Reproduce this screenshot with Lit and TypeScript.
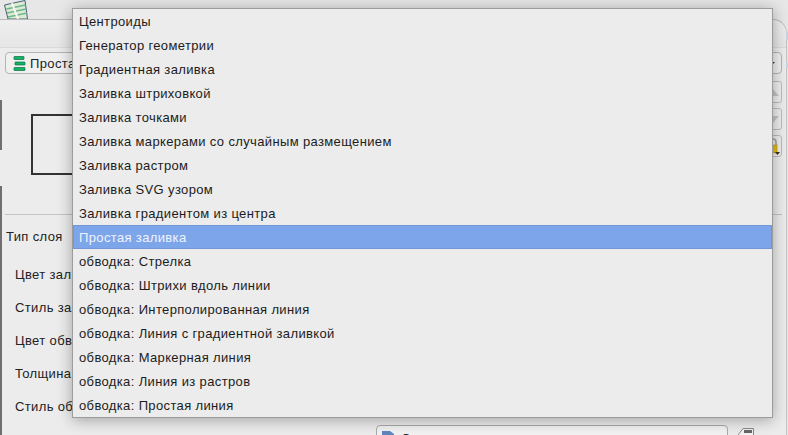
import { LitElement, html, css } from 'lit';
import { customElement } from 'lit/decorators.js';
import { classMap } from 'lit/directives/class-map.js';

const MENU_ITEMS = [
  'Центроиды',
  'Генератор геометрии',
  'Градиентная заливка',
  'Заливка штриховкой',
  'Заливка точками',
  'Заливка маркерами со случайным размещением',
  'Заливка растром',
  'Заливка SVG узором',
  'Заливка градиентом из центра',
  'Простая заливка',
  'обводка: Стрелка',
  'обводка: Штрихи вдоль линии',
  'обводка: Интерполированная линия',
  'обводка: Линия с градиентной заливкой',
  'обводка: Маркерная линия',
  'обводка: Линия из растров',
  'обводка: Простая линия',
];

const FIELDS = ['Цвет заливки', 'Стиль заливки', 'Цвет обводки', 'Толщина обводки', 'Стиль обводки', 'Стиль соединения'];

@customElement('app-root')
export class AppRoot extends LitElement {
  static styles = css`
    :host {
      display: block;
      font-family: 'Liberation Sans', Arial, sans-serif;
      font-size: 13px;
      letter-spacing: 0.36px;
      color: #222;
    }
    .page {
      position: relative;
      width: 788px;
      height: 435px;
      overflow: hidden;
      background: #e7e7e7;
      display: flex;
      flex-direction: column;
    }
    .titlebar {
      height: 19px;
      flex: none;
      padding-left: 4px;
    }
    .titlebar svg {
      display: block;
    }
    .window {
      flex: 1;
      min-height: 0;
      margin-right: 1px;
      border-top: 1px solid #b9b9b9;
      border-right: 1px solid #c4c4c4;
      border-top-right-radius: 14px;
      background: #ececec;
      display: flex;
      flex-direction: column;
    }
    .tabbar {
      height: 28px;
      flex: none;
      box-sizing: border-box;
      border-bottom: 1px solid #dadada;
      border-top-right-radius: 14px;
      background: linear-gradient(#eeeeee, #e6e6e6);
    }
    .content {
      flex: 1;
      min-height: 0;
      padding: 4px 4px 0 5px;
      display: flex;
      flex-direction: column;
    }
    .combo {
      height: 22px;
      flex: none;
      box-sizing: border-box;
      border: 1px solid #b4b4b4;
      border-radius: 4px;
      background: #f0f0f0;
      display: flex;
      align-items: center;
      gap: 4px;
      padding: 0 6px 0 7px;
    }
    .combo .arrow {
      margin-left: auto;
      width: 0;
      height: 0;
      border-left: 3px solid transparent;
      border-right: 3px solid transparent;
      border-top: 3px solid #333;
    }
    .preview {
      height: 140px;
      flex: none;
      display: flex;
      justify-content: space-between;
      padding-top: 7px;
      box-sizing: border-box;
    }
    .swatch {
      width: 130px;
      height: 61px;
      box-sizing: border-box;
      margin: 33px 0 0 26px;
      border: 2px solid #333;
    }
    .tools {
      display: flex;
      flex-direction: column;
      gap: 5px;
      width: 22px;
    }
    .tool {
      height: 22px;
      border: 1px solid #bdbdbd;
      border-radius: 3px;
      background: #eeeeee;
      display: flex;
      align-items: center;
      justify-content: flex-end;
      padding-right: 1px;
      box-sizing: border-box;
    }
    .rule {
      height: 1px;
      flex: none;
      background: #c4c4c4;
    }
    .type-row {
      margin-top: 14px;
      height: 15px;
      line-height: 15px;
      padding-left: 1px;
      flex: none;
    }
    .fields {
      display: flex;
      flex-direction: column;
      gap: 18px;
      padding: 23px 0 0 10px;
    }
    .field {
      height: 15px;
      line-height: 15px;
      white-space: nowrap;
    }
    .edge {
      position: absolute;
      left: 0;
      width: 2px;
      background: #6f6f6f;
    }
    .edge.top {
      top: 100px;
      height: 50px;
    }
    .edge.bottom {
      top: 186px;
      bottom: 0;
    }
    .glint {
      position: absolute;
      left: 786px;
      width: 2px;
      background: #c6d6e4;
    }
    .glint.one {
      top: 32px;
      height: 8px;
    }
    .glint.two {
      top: 63px;
      height: 5px;
    }
    .bottom-combo {
      position: absolute;
      left: 376px;
      top: 425px;
      width: 352px;
      height: 23px;
      box-sizing: border-box;
      border: 1px solid #a9a9a9;
      border-radius: 4px;
      background: #f2f2f2;
      display: flex;
      gap: 6px;
      padding: 5px 0 0 5px;
      line-height: 15px;
    }
    .bottom-icon {
      position: absolute;
      left: 738px;
      top: 428px;
    }
    .menu {
      position: absolute;
      left: 72px;
      top: 8px;
      width: 701px;
      box-sizing: border-box;
      background: #ececec;
      border: 1px solid #9c9c9c;
      box-shadow: 0 2px 14px rgba(0, 0, 0, 0.32);
      display: flex;
      flex-direction: column;
    }
    .item {
      height: 24px;
      line-height: 26px;
      padding-left: 6px;
      color: #1c1c1c;
      white-space: nowrap;
    }
    .item.active {
      background: #7da5ea;
      color: #eef3fd;
      box-shadow: inset 0 0 0 1px #7396d6;
    }
  `;

  private renderAppIcon() {
    return html`<svg width="24" height="19" viewBox="0 0 24 19">
      <polygon points="0.5,5 21,0.5 23.5,19 4,19" fill="#dcebd2" stroke="#44607e" stroke-width="1" />
      <path d="M2.5 9 L21.5 5 M3 13 L22 9 M4 17 L23 13" stroke="#6fb592" stroke-width="1.5" />
      <path d="M8 3 L14 19" stroke="#f6f9f1" stroke-width="2" />
    </svg>`;
  }

  private renderFillIcon() {
    return html`<svg width="13" height="15" viewBox="0 0 13 15" style="flex:none">
      <rect x="1" y="0.5" width="10" height="3" rx="0.5" fill="#12b565" stroke="#0c6b3f" stroke-width="0.7" />
      <rect x="2" y="6" width="10" height="3" rx="0.5" fill="#12b565" stroke="#0c6b3f" stroke-width="0.7" />
      <rect x="1" y="11.5" width="11" height="3" rx="0.5" fill="#12b565" stroke="#0c6b3f" stroke-width="0.7" />
    </svg>`;
  }

  private renderTools() {
    return html`<div class="tools">
      <div class="tool">
        <svg width="11" height="10" viewBox="0 0 11 10"><polygon points="-2,9 4,2 10,9" fill="#c6c6c6" /></svg>
      </div>
      <div class="tool">
        <svg width="11" height="10" viewBox="0 0 11 10"><polygon points="-2,2 10,2 4,9" fill="#c6c6c6" /></svg>
      </div>
      <div class="tool">
        <svg width="13" height="18" viewBox="0 0 13 18">
          <path d="M3 8 V5 a3 3 0 0 1 6 0 V8" fill="none" stroke="#a0a0a0" stroke-width="1.5" />
          <rect x="2" y="8" width="8" height="8" fill="#e6bd12" stroke="#a88c10" stroke-width="0.5" />
          <polygon points="8,15 13,15 10.5,18" fill="#333" />
        </svg>
      </div>
    </div>`;
  }

  render() {
    return html`
      <div class="page">
        <div class="titlebar">${this.renderAppIcon()}</div>
        <div class="window">
          <div class="tabbar"></div>
          <div class="content">
            <div class="combo">
              ${this.renderFillIcon()}
              <span>Простая заливка</span>
              <span class="arrow"></span>
            </div>
            <div class="preview">
              <div class="swatch"></div>
              ${this.renderTools()}
            </div>
            <div class="rule"></div>
            <div class="type-row">Тип слоя</div>
            <div class="fields">${FIELDS.map((f) => html`<div class="field">${f}</div>`)}</div>
          </div>
        </div>
        <div class="edge top"></div>
        <div class="edge bottom"></div>
        <div class="glint one"></div>
        <div class="glint two"></div>
        <div class="bottom-combo">
          <svg width="13" height="15" viewBox="0 0 13 15" style="flex:none">
            <path d="M0 0 H8 L12 3 V15 H0 Z" fill="#5f86bd" />
          </svg>
          <span>Сплошная линия</span>
        </div>
        <svg class="bottom-icon" width="18" height="7" viewBox="0 0 18 7">
          <path d="M0 7 L5 0.5 H15.5 V7" fill="#f2f2f2" stroke="#888" stroke-width="1" />
          <rect x="6" y="2" width="8" height="3" fill="#666" />
        </svg>
        <div class="menu">
          ${MENU_ITEMS.map(
            (label, i) => html`<div class=${classMap({ item: true, active: i === 9 })}>${label}</div>`,
          )}
        </div>
      </div>
    `;
  }
}
